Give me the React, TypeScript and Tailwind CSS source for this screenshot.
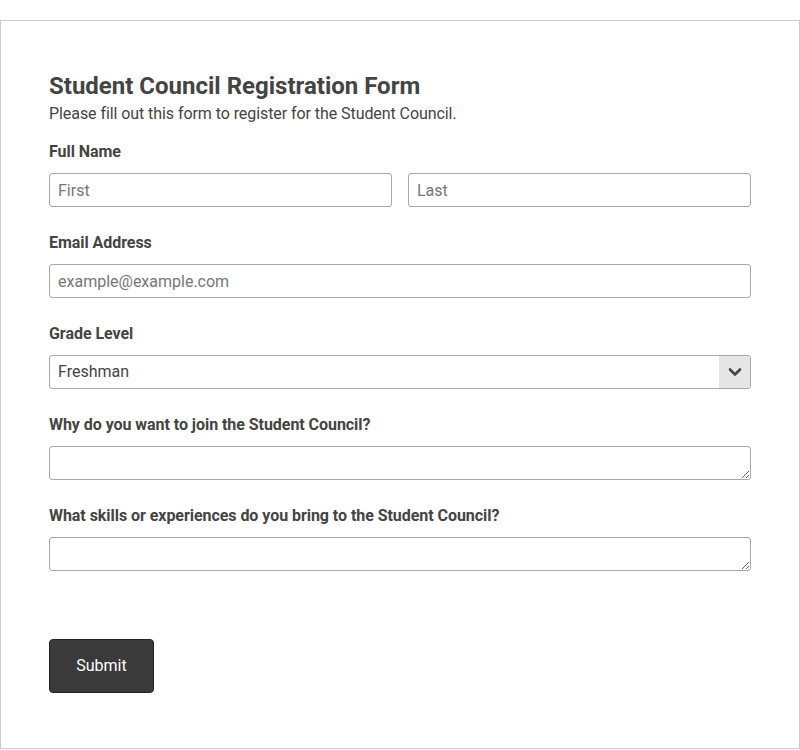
import React from "react";

const inputCls =
  "block w-full h-[34px] px-2 rounded-[3px] border border-[#aaaaaa] bg-white text-base text-[#444] placeholder:text-[#777] outline-none";

const labelCls = "block text-base font-bold leading-6 mb-[9px] tracking-[-0.05px]";

export default function App() {
  return (
    <div className="pt-5 bg-white" style={{ fontFamily: "Roboto, 'Liberation Sans', sans-serif" }}>
      <form className="border border-[#cccccc] px-12 pt-[51px] pb-[55px] text-[#444]">
        <h1 className="text-2xl font-bold leading-7 text-[#444]">Student Council Registration Form</h1>
        <p className="text-base leading-6 mt-[2px] tracking-[-0.07px]">
          Please fill out this form to register for the Student Council.
        </p>

        <div className="mt-[14px]">
          <label className={labelCls}>Full Name</label>
          <div className="grid grid-cols-2 gap-4">
            <input className={inputCls} placeholder="First" />
            <input className={inputCls} placeholder="Last" />
          </div>
        </div>

        <div className="mt-[24px]">
          <label className={labelCls}>Email Address</label>
          <input className={inputCls} placeholder="example@example.com" />
        </div>

        <div className="mt-[24px]">
          <label className={labelCls}>Grade Level</label>
          <div className="relative">
            <select className={inputCls + " appearance-none pr-10"} defaultValue="Freshman">
              <option>Freshman</option>
              <option>Sophomore</option>
              <option>Junior</option>
              <option>Senior</option>
            </select>
            <div className="pointer-events-none absolute right-px top-px bottom-px w-[31px] bg-[#e6e6e6] rounded-r-[2px] flex items-center justify-center">
              <svg width="14" height="10" viewBox="0 0 14 10" fill="none">
                <path d="M2 2.5 L7 7.5 L12 2.5" stroke="#444" strokeWidth="2.6" strokeLinecap="round" strokeLinejoin="round" />
              </svg>
            </div>
          </div>
        </div>

        <div className="mt-[24px]">
          <label className={labelCls}>Why do you want to join the Student Council?</label>
          <textarea className="block w-full h-[34px] px-2 rounded-[3px] border border-[#aaaaaa] bg-white text-base outline-none" />
        </div>

        <div className="mt-[24px]">
          <label className={labelCls}>What skills or experiences do you bring to the Student Council?</label>
          <textarea className="block w-full h-[34px] px-2 rounded-[3px] border border-[#aaaaaa] bg-white text-base outline-none" />
        </div>

        <button
          type="button"
          className="mt-[68px] block w-[105px] h-[54px] rounded-[4px] bg-[#3a3a3a] border border-[#222] text-white text-base"
        >
          Submit
        </button>
      </form>
    </div>
  );
}
